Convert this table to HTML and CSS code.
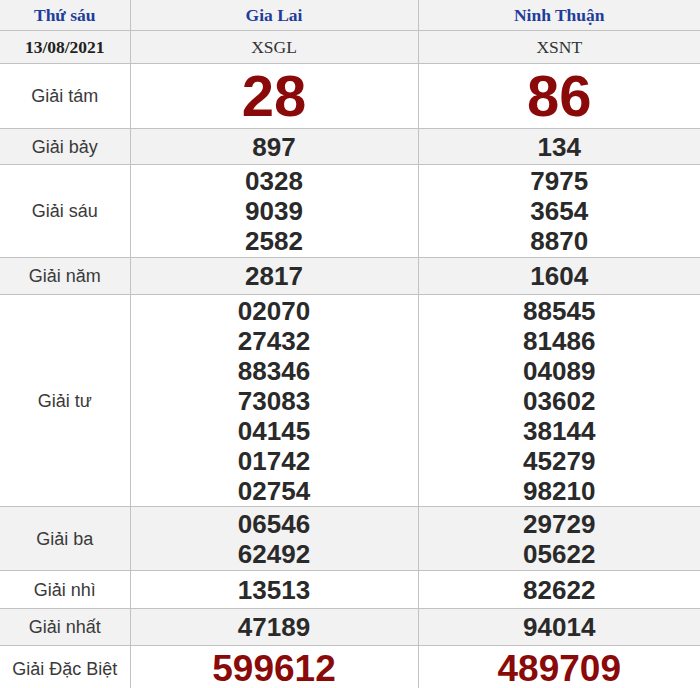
FILE: index.html
```html
<!DOCTYPE html>
<html lang="vi">
<head>
<meta charset="utf-8">
<title>Kết quả xổ số 13/08/2021</title>
<link rel="stylesheet" href="styles.css">
</head>
<body>
<table class="kq">
  <colgroup>
    <col class="c-label">
    <col class="c-prov">
    <col class="c-prov2">
  </colgroup>
  <tr class="r-head alt">
    <th class="day">Thứ sáu</th>
    <th class="prov">Gia Lai</th>
    <th class="prov">Ninh Thuận</th>
  </tr>
  <tr class="r-code alt">
    <th class="date">13/08/2021</th>
    <td class="code">XSGL</td>
    <td class="code">XSNT</td>
  </tr>
  <tr class="r-g8">
    <td class="lbl">Giải tám</td>
    <td class="big">28</td>
    <td class="big">86</td>
  </tr>
  <tr class="r-1 alt">
    <td class="lbl">Giải bảy</td>
    <td class="num">897</td>
    <td class="num">134</td>
  </tr>
  <tr class="r-g6">
    <td class="lbl">Giải sáu</td>
    <td class="num">0328<br>9039<br>2582</td>
    <td class="num">7975<br>3654<br>8870</td>
  </tr>
  <tr class="r-1b alt">
    <td class="lbl">Giải năm</td>
    <td class="num">2817</td>
    <td class="num">1604</td>
  </tr>
  <tr class="r-g4">
    <td class="lbl">Giải tư</td>
    <td class="num">02070<br>27432<br>88346<br>73083<br>04145<br>01742<br>02754</td>
    <td class="num">88545<br>81486<br>04089<br>03602<br>38144<br>45279<br>98210</td>
  </tr>
  <tr class="r-g3 alt">
    <td class="lbl">Giải ba</td>
    <td class="num">06546<br>62492</td>
    <td class="num">29729<br>05622</td>
  </tr>
  <tr class="r-2">
    <td class="lbl">Giải nhì</td>
    <td class="num">13513</td>
    <td class="num">82622</td>
  </tr>
  <tr class="r-1b alt">
    <td class="lbl">Giải nhất</td>
    <td class="num">47189</td>
    <td class="num">94014</td>
  </tr>
  <tr class="r-db">
    <td class="lbl">Giải Đặc Biệt</td>
    <td class="db">599612</td>
    <td class="db">489709</td>
  </tr>
</table>
</body>
</html>
```

FILE: styles.css
```css
html, body {
  margin: 0;
  padding: 0;
  background: #ffffff;
}

.kq {
  width: 700px;
  border-collapse: collapse;
  table-layout: fixed;
  font-family: "Liberation Sans", Arial, sans-serif;
  color: #333333;
}

.c-label { width: 130px; }
.c-prov { width: 288px; }
.c-prov2 { width: 282px; }

.kq th,
.kq td {
  padding: 0;
  text-align: center;
  vertical-align: middle;
  border: 1px solid #c2c2c2;
  line-height: 30px;
}

.kq tr > :first-child { border-left: none; }
.kq tr > :last-child { border-right: none; }
.kq tr:first-child > * { border-top: none; }

.alt { background: #f2f2f2; }

.r-head { height: 28px; }
.r-code { height: 33px; }
.r-g8 { height: 65px; }
.r-1 { height: 36px; }
.r-g6 { height: 93px; }
.r-1b { height: 37px; }
.r-g4 { height: 212px; }
.r-g3 { height: 64px; }
.r-2 { height: 38px; }
.r-db { height: 46px; }

.day,
.prov {
  font-family: "Liberation Serif", "Times New Roman", serif;
  font-weight: bold;
  font-size: 17.5px;
  color: #1f3d9a;
  line-height: 22px;
}

.day,
.date {
  padding-right: 6px;
}

.date {
  font-family: "Liberation Serif", "Times New Roman", serif;
  font-weight: bold;
  font-size: 17.5px;
  color: #222222;
}

.code {
  font-family: "Liberation Serif", "Times New Roman", serif;
  font-size: 17.5px;
  color: #333333;
}

.lbl {
  font-size: 18px;
  color: #3a3a3a;
  padding-right: 6px;
}

.num {
  font-weight: bold;
  font-size: 26px;
  color: #2a2a2a;
  padding-bottom: 3px;
}

.big {
  font-weight: bold;
  font-size: 58px;
  color: #8a0a0a;
  line-height: 60px;
  padding-bottom: 5px;
}

.db {
  font-weight: bold;
  font-size: 37px;
  color: #8a0a0a;
  line-height: 40px;
}
```
